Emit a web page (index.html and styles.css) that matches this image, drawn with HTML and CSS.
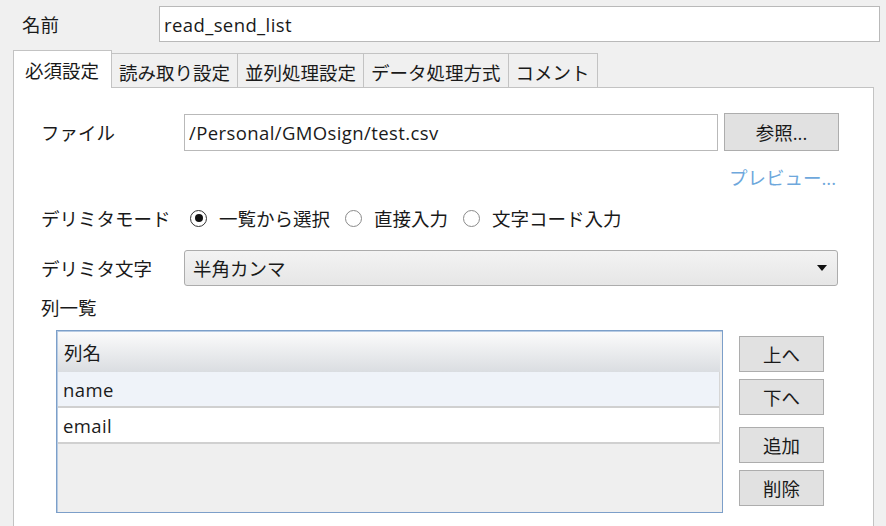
FILE: index.html
```html
<!DOCTYPE html>
<html lang="ja">
<head>
<meta charset="utf-8">
<link rel="stylesheet" href="styles.css">
</head>
<body>
<div class="name-row">
  <span class="name-label">名前</span>
  <div class="text-input name-input"><span class="latin">read_send_list</span></div>
</div>
<div class="tabs">
  <div class="tab active">必須設定</div>
  <div class="tab">読み取り設定</div>
  <div class="tab">並列処理設定</div>
  <div class="tab">データ処理方式</div>
  <div class="tab">コメント</div>
</div>
<div class="panel">
  <div class="row file-row">
    <span class="label">ファイル</span>
    <div class="text-input file-input"><span class="latin">/Personal/GMOsign/test.csv</span></div>
    <div class="btn browse">参照...</div>
  </div>
  <div class="preview-row"><span class="preview">プレビュー...</span></div>
  <div class="row mode-row">
    <span class="label">デリミタモード</span>
    <div class="radios">
      <span class="radio checked"><span class="circle"></span>一覧から選択</span>
      <span class="radio"><span class="circle"></span>直接入力</span>
      <span class="radio"><span class="circle"></span>文字コード入力</span>
    </div>
  </div>
  <div class="row char-row">
    <span class="label">デリミタ文字</span>
    <div class="select"><span>半角カンマ</span><span class="arrow"></span></div>
  </div>
  <div class="list-label">列一覧</div>
  <div class="list-area">
    <div class="table">
      <div class="thead">列名</div>
      <div class="trow sel"><span class="latin">name</span></div>
      <div class="trow"><span class="latin">email</span></div>
    </div>
    <div class="side-btns">
      <div class="btn sbtn">上へ</div>
      <div class="btn sbtn">下へ</div>
      <div class="btn sbtn gap">追加</div>
      <div class="btn sbtn">削除</div>
    </div>
  </div>
</div>
</body>
</html>
```
FILE: styles.css
```css
* { box-sizing: border-box; }
html, body { margin: 0; padding: 0; }
body {
  background: #f0f0f0;
  font-family: "Open Sans", "Noto Sans CJK JP", sans-serif;
  font-size: 18.5px;
  color: #1a1a1a;
  width: 886px;
  height: 526px;
  overflow: hidden;
}
.latin { letter-spacing: 0.4px; }
.name-row {
  display: flex;
  align-items: center;
  height: 36px;
  margin-top: 6px;
  padding-left: 22px;
}
.name-label { width: 137px; }
.text-input {
  background: #fff;
  border: 1px solid #b9b9b9;
  height: 36px;
  display: flex;
  align-items: center;
  padding-left: 4px;
  white-space: nowrap;
}
.name-input { width: 721px; }
.tabs {
  display: flex;
  align-items: flex-end;
  margin-top: 8px;
  margin-left: 13px;
  height: 37px;
}
.tab {
  height: 34px;
  border: 1px solid #c3c3c3;
  border-left: none;
  border-bottom: none;
  background: #f0f0f0;
  display: flex;
  align-items: center;
  padding: 2px 7px 0 7px;
  white-space: nowrap;
}
.tab.active {
  height: 38px;
  margin-bottom: -1px;
  background: #fff;
  border-left: 1px solid #c3c3c3;
  padding: 0 12px 0 11px;
  position: relative;
  z-index: 1;
}
.panel {
  margin-left: 13px;
  width: 861px;
  height: 460px;
  background: #fff;
  border: 1px solid #c3c3c3;
  padding: 25px 0 0 27px;
}
.row { display: flex; align-items: center; }
.label { width: 143px; flex: none; }
.file-row { height: 38px; }
.file-input { width: 534px; height: 37px; }
.btn {
  background: #e1e1e1;
  border: 1px solid #adadad;
  display: flex;
  align-items: center;
  justify-content: center;
}
.browse { width: 115px; height: 38px; margin-left: 6px; }
.preview-row {
  height: 28px;
  margin-top: 13px;
  width: 795px;
  text-align: right;
}
.preview { color: #6ea8dc; }
.mode-row { height: 26px; margin-top: 13px; }
.radios { display: flex; align-items: center; margin-left: 6px; }
.radio { display: flex; align-items: center; margin-right: 15px; }
.circle {
  width: 17px; height: 17px;
  border: 1.5px solid #8a8a8a;
  border-radius: 50%;
  margin-right: 12px;
  display: inline-flex;
  align-items: center;
  justify-content: center;
}
.radio.checked .circle { border-color: #333; }
.radio.checked .circle::after {
  content: "";
  width: 8px; height: 8px;
  border-radius: 50%;
  background: #111;
}
.char-row { height: 36px; margin-top: 19px; }
.select {
  width: 654px;
  height: 36px;
  border: 1px solid #acacac;
  border-radius: 3px;
  background: linear-gradient(#f3f3f3, #e6e6e6);
  display: flex;
  align-items: center;
  justify-content: space-between;
  padding: 0 10px 0 8px;
}
.arrow {
  width: 0; height: 0;
  border-left: 5px solid transparent;
  border-right: 5px solid transparent;
  border-top: 6px solid #111;
}
.list-label { height: 26px; margin-top: 8px; display: flex; align-items: center; }
.list-area { display: flex; margin-top: 10px; margin-left: 15px; }
.table {
  width: 667px;
  height: 183px;
  border: 1px solid #7c9fc9;
  box-shadow: inset 1px 1px 0 #b7cbe3;
  background: #efefef;
  padding: 1px 2px 0 1px;
}
.thead {
  height: 40px;
  background: linear-gradient(#fbfbfb, #dadde1);
  display: flex;
  align-items: center;
  padding-left: 6px;
}
.trow {
  height: 36px;
  border-bottom: 2px solid #d0d0d0;
  border-right: 1px solid #d6d6d6;
  background: #fff;
  display: flex;
  align-items: center;
  padding-left: 5px;
}
.trow.sel { background: #eff3f9; }
.side-btns { display: flex; flex-direction: column; margin-left: 16px; padding-top: 6px; }
.sbtn { width: 85px; height: 36px; margin-bottom: 7px; }
.sbtn.gap { margin-top: 5px; }
```
